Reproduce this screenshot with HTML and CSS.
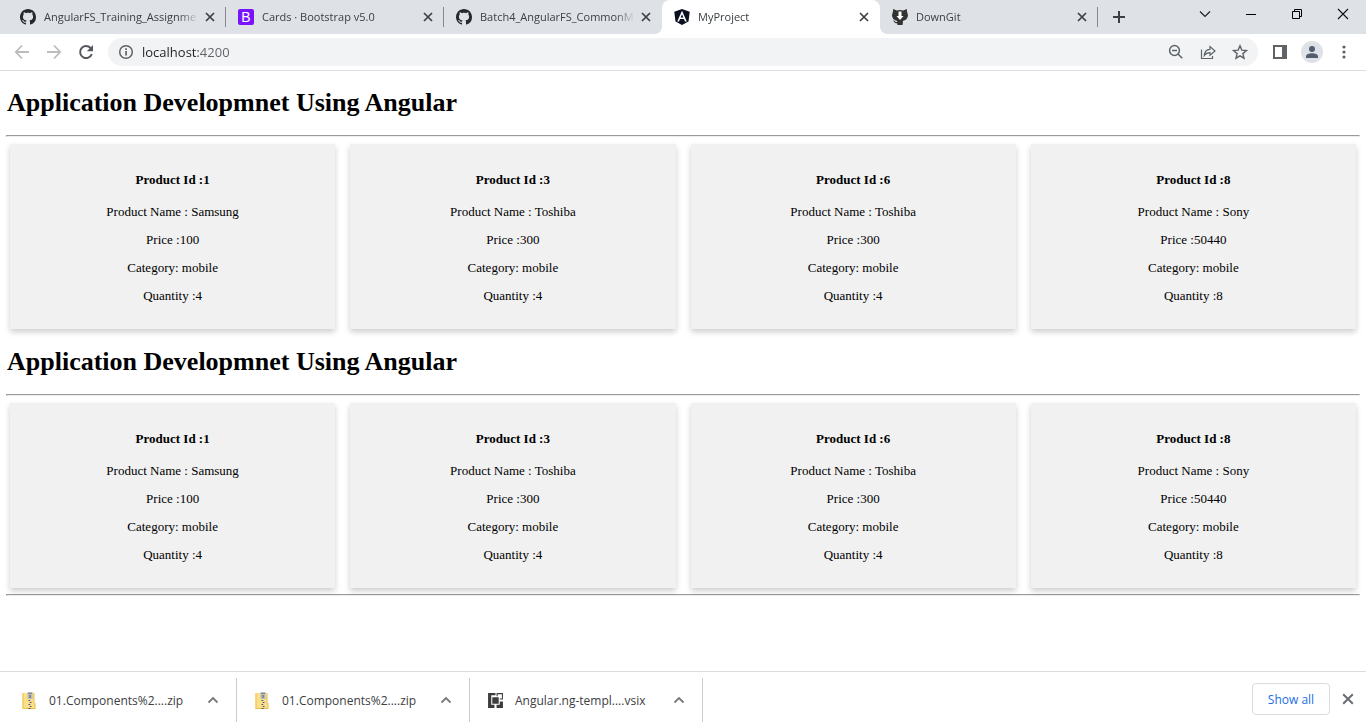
FILE: index.html
```html
<!DOCTYPE html>
<html lang="en">
<head>
<meta charset="utf-8">
<title>MyProject</title>
<link rel="stylesheet" href="styles.css">
</head>
<body>
<svg class="defs" aria-hidden="true">
  <symbol id="github" viewBox="0 0 16 16"><path fill="#24292f" d="M8 0C3.58 0 0 3.58 0 8c0 3.54 2.29 6.53 5.47 7.59.4.07.55-.17.55-.38 0-.19-.01-.82-.01-1.49-2.01.37-2.53-.49-2.69-.94-.09-.23-.48-.94-.82-1.13-.28-.15-.68-.52-.01-.53.63-.01 1.08.58 1.23.82.72 1.21 1.87.87 2.33.66.07-.52.28-.87.51-1.07-1.78-.2-3.64-.89-3.64-3.95 0-.87.31-1.59.82-2.15-.08-.2-.36-1.02.08-2.12 0 0 .67-.21 2.2.82.64-.18 1.32-.27 2-.27s1.36.09 2 .27c1.53-1.04 2.2-.82 2.2-.82.44 1.1.16 1.92.08 2.12.51.56.82 1.27.82 2.15 0 3.07-1.87 3.75-3.65 3.95.29.25.54.73.54 1.48 0 1.07-.01 1.93-.01 2.2 0 .21.15.46.55.38A8.01 8.01 0 0 0 16 8c0-4.42-3.58-8-8-8z"/></symbol>
  <symbol id="cross" viewBox="0 0 10 10"><path d="M1 1l8 8M9 1l-8 8" fill="none" stroke="currentColor" stroke-width="1.7"/></symbol>
  <symbol id="chevron-up" viewBox="0 0 12 8"><path d="M1.500 6.500L6 2l4.500 4.500" fill="none" stroke="currentColor" stroke-width="1.800"/></symbol>
  <symbol id="zip" viewBox="0 0 14 17">
    <path fill="#e9bd4a" d="M0 1h12v10h1v6H0z"/>
    <path fill="#fbe08a" d="M1 1h10v10h1v5H1z"/>
    <path fill="#f5d268" d="M0 1h1v16H0z"/>
    <path fill="#b9bdc2" d="M5 0h5v7H5z"/>
    <path fill="#55585c" d="M6 1h1v1H6zM8 1h1v1H8zM7 3h1v3H7zM6 8h2v1H6zM7 10h2v1H7zM6 12h2v1H6zM7 14h2v1H7zM6 16h2v1H6z"/>
    <path fill="#d8d9d6" d="M8 8h1v1H8zM6 10h1v1H6zM8 12h1v1H8zM6 14h1v1H6z"/>
  </symbol>
</svg>

<header class="browser">
  <div class="tabstrip">
    <nav class="tabs" aria-label="Tabs">
      <div class="tab">
        <svg class="favicon" aria-hidden="true"><use href="#github"/></svg>
        <span class="tab-title">AngularFS_Training_Assignme</span>
        <button class="tab-close" aria-label="Close tab"><svg><use href="#cross"/></svg></button>
      </div>
      <div class="tab">
        <span class="favicon bootstrap" aria-hidden="true">B</span>
        <span class="tab-title">Cards · Bootstrap v5.0</span>
        <button class="tab-close" aria-label="Close tab"><svg><use href="#cross"/></svg></button>
      </div>
      <div class="tab before-active">
        <svg class="favicon" aria-hidden="true"><use href="#github"/></svg>
        <span class="tab-title">Batch4_AngularFS_CommonM</span>
        <button class="tab-close" aria-label="Close tab"><svg><use href="#cross"/></svg></button>
      </div>
      <div class="tab active">
        <svg class="favicon" viewBox="0 0 16 16" aria-hidden="true"><path fill="#0b1020" d="M8 0l7.700 2.700-1.200 9.700L8 16l-6.500-3.600L.3 2.700z"/><path fill="#fff" fill-rule="evenodd" d="M8 1.800L3.200 12.400H5l1-2.400h4l1 2.400h1.800zM8 5.200l1.400 3.300H6.600z"/></svg>
        <span class="tab-title">MyProject</span>
        <button class="tab-close" aria-label="Close tab"><svg><use href="#cross"/></svg></button>
      </div>
      <div class="tab">
        <svg class="favicon" viewBox="0 0 16 16" aria-hidden="true"><path fill="#333" d="M1.200 0l3.500 1.500Q8 .7 11.300 1.500L14.800 0l.4 3.500Q16.200 5 15.800 7.500 15 11 10.800 12v3.200q0 .8-.8.8H6q-.8 0-.8-.8v-1Q3 14.600 2.300 13 1.800 12 .9 11.500q1.500-.4 2.300.9.700 1 2 .6V12Q1 11 .2 7.500-.2 5 .8 3.500z"/><path fill="#fff" d="M6.500 2.500h3V7h2L8 11 4.500 7h2z"/></svg>
        <span class="tab-title">DownGit</span>
        <button class="tab-close" aria-label="Close tab"><svg><use href="#cross"/></svg></button>
      </div>
    </nav>
    <button class="new-tab" aria-label="New tab"><svg width="12" height="12" viewBox="0 0 12 12"><path d="M6 0v12M0 6h12" stroke="currentColor" stroke-width="2"/></svg></button>
    <div class="window-controls">
      <button aria-label="Search tabs"><svg width="12" height="12" viewBox="0 0 12 12"><path d="M1 3.500l5 5 5-5" fill="none" stroke="#222" stroke-width="1.200"/></svg></button>
      <button aria-label="Minimize"><svg width="12" height="12" viewBox="0 0 12 12"><path d="M1 6h10v1H1z" fill="#000"/></svg></button>
      <button aria-label="Restore"><svg width="12" height="12" viewBox="0 0 12 12"><path d="M1.500 3.500h7v7h-7zM3.500 3V1.500h7v7H9" fill="none" stroke="#000"/></svg></button>
      <button aria-label="Close"><svg width="12" height="12" viewBox="0 0 12 12"><path d="M1 1l10 10M11 1L1 11" stroke="#111" stroke-width="1.100"/></svg></button>
    </div>
  </div>

  <div class="toolbar">
    <button class="nav-button disabled" aria-label="Back"><svg width="16" height="16" viewBox="0 0 16 16"><path d="M8 1.500L1.800 8 8 14.500M2 8h13" fill="none" stroke="currentColor" stroke-width="1.800"/></svg></button>
    <button class="nav-button disabled" aria-label="Forward"><svg width="16" height="16" viewBox="0 0 16 16"><path d="M8 1.500L14.200 8 8 14.500M14 8H1" fill="none" stroke="currentColor" stroke-width="1.800"/></svg></button>
    <button class="nav-button" aria-label="Reload"><svg width="16" height="16" viewBox="0 0 16 16"><path d="M13.800 10A6 6 0 1 1 12.500 4" fill="none" stroke="currentColor" stroke-width="2"/><path d="M15 1v6.200H8.800z" fill="currentColor"/></svg></button>
    <div class="omnibox">
      <svg width="16" height="16" viewBox="0 0 16 16" aria-hidden="true"><circle cx="8" cy="8" r="6.300" fill="none" stroke="currentColor" stroke-width="1.500"/><path d="M7.200 7h1.700v4.500H7.200zM7.200 4.200h1.700v1.700H7.200z" fill="currentColor"/></svg>
      <input class="address" type="text" aria-label="Address" value="localhost:4200">
      <div class="omnibox-actions">
        <button aria-label="Zoom"><svg width="16" height="16" viewBox="0 0 16 16"><circle cx="6.500" cy="6.500" r="4.900" fill="none" stroke="currentColor" stroke-width="1.500"/><path d="M10 10l4.300 4.300M4 6.500h5" stroke="currentColor" stroke-width="1.500"/></svg></button>
        <button aria-label="Share"><svg width="16" height="16" viewBox="0 0 16 16"><path d="M1.500 5.500v9h11v-2.500" fill="none" stroke="currentColor" stroke-width="1.200"/><path d="M4.300 11.500c.3-4 2.300-6 5.700-6.200V2.500L15 7l-5 4.300V8.700c-2.500 0-4.200.8-5.700 2.800z" fill="none" stroke="currentColor" stroke-width="1.200"/></svg></button>
        <button aria-label="Bookmark"><svg width="16" height="16" viewBox="0 0 16 16"><path d="M8 1.800l1.800 4.300 4.700.4-3.600 3.100 1.100 4.600L8 11.800l-4 2.400 1.100-4.600L1.500 6.500l4.700-.4z" fill="none" stroke="currentColor" stroke-width="1.400"/></svg></button>
      </div>
    </div>
    <div class="toolbar-actions">
      <button aria-label="Side panel"><svg width="14" height="14" viewBox="0 0 14 14"><path fill-rule="evenodd" d="M0 0h14v14H0zM2 2v10h7V2z" fill="currentColor"/></svg></button>
      <button class="profile" aria-label="Profile"><svg width="14" height="14" viewBox="0 0 14 14"><circle cx="7" cy="4" r="3" fill="currentColor"/><path d="M1 13v-1.500C1 9.300 4 8.300 7 8.300s6 1 6 3.200V13z" fill="currentColor"/></svg></button>
      <button aria-label="Menu"><svg width="4" height="14" viewBox="0 0 4 14"><g fill="currentColor"><circle cx="2" cy="2" r="1.600"/><circle cx="2" cy="7" r="1.600"/><circle cx="2" cy="12" r="1.600"/></g></svg></button>
    </div>
  </div>
</header>

<main class="page">
  <section>
    <h1>Application Developmnet Using Angular</h1>
    <hr>
    <div class="cards">
      <article class="card"><h3>Product Id :1</h3><p>Product Name : Samsung</p><p>Price :100</p><p>Category: mobile</p><p>Quantity :4</p></article>
      <article class="card"><h3>Product Id :3</h3><p>Product Name : Toshiba</p><p>Price :300</p><p>Category: mobile</p><p>Quantity :4</p></article>
      <article class="card"><h3>Product Id :6</h3><p>Product Name : Toshiba</p><p>Price :300</p><p>Category: mobile</p><p>Quantity :4</p></article>
      <article class="card"><h3>Product Id :8</h3><p>Product Name : Sony</p><p>Price :50440</p><p>Category: mobile</p><p>Quantity :8</p></article>
    </div>
  </section>
  <section>
    <h1>Application Developmnet Using Angular</h1>
    <hr>
    <div class="cards">
      <article class="card"><h3>Product Id :1</h3><p>Product Name : Samsung</p><p>Price :100</p><p>Category: mobile</p><p>Quantity :4</p></article>
      <article class="card"><h3>Product Id :3</h3><p>Product Name : Toshiba</p><p>Price :300</p><p>Category: mobile</p><p>Quantity :4</p></article>
      <article class="card"><h3>Product Id :6</h3><p>Product Name : Toshiba</p><p>Price :300</p><p>Category: mobile</p><p>Quantity :4</p></article>
      <article class="card"><h3>Product Id :8</h3><p>Product Name : Sony</p><p>Price :50440</p><p>Category: mobile</p><p>Quantity :8</p></article>
    </div>
  </section>
  <hr class="page-end">
</main>

<footer class="downloads">
  <div class="download">
    <svg class="file-icon" aria-hidden="true"><use href="#zip"/></svg>
    <span class="file-name">01.Components%2....zip</span>
    <button aria-label="Download options"><svg width="12" height="8"><use href="#chevron-up"/></svg></button>
  </div>
  <div class="download">
    <svg class="file-icon" aria-hidden="true"><use href="#zip"/></svg>
    <span class="file-name">01.Components%2....zip</span>
    <button aria-label="Download options"><svg width="12" height="8"><use href="#chevron-up"/></svg></button>
  </div>
  <div class="download">
    <svg class="file-icon" viewBox="0 0 16 16" aria-hidden="true"><path fill="#3c3c3e" d="M1 1h7v2H4v9h3v3H1zM15 15H9v-3h3V9h3zM5 5h6v6H5zM9 1h6v6h-3V6h2V2h-4v2H9z"/></svg>
    <span class="file-name">Angular.ng-templ....vsix</span>
    <button aria-label="Download options"><svg width="12" height="8"><use href="#chevron-up"/></svg></button>
  </div>
  <div class="shelf-actions">
    <button class="show-all">Show all</button>
    <button class="shelf-close" aria-label="Close downloads bar"><svg width="12" height="12"><use href="#cross"/></svg></button>
  </div>
</footer>
</body>
</html>
```

FILE: styles.css
```css
* { box-sizing: border-box; }

body {
  margin: 0;
  min-height: 100vh;
  display: flex;
  flex-direction: column;
  background: #fff;
  font-family: "Open Sans", "Noto Sans", sans-serif;
  font-size: 12px;
  color: #3c4043;
}

button {
  display: flex;
  align-items: center;
  justify-content: center;
  flex: none;
  padding: 0;
  border: 0;
  background: none;
  color: inherit;
  font: inherit;
}

svg { display: block; flex: none; }
.defs { position: absolute; width: 0; height: 0; }

/* Tab strip */
.tabstrip {
  display: flex;
  height: 34px;
  padding-left: 8px;
  background: #dee1e6;
}
.tabs { display: flex; flex: 0 1 1090px; min-width: 0; }
.tab {
  position: relative;
  display: flex;
  align-items: center;
  flex: 1 1 0;
  min-width: 0;
  padding: 0 8px 0 12px;
}
.tab::after {
  content: "";
  position: absolute;
  top: 7px;
  right: 0;
  width: 1px;
  height: 20px;
  background: #85888d;
}
.tab.before-active::after { display: none; }
.tab.active { background: #fff; border-radius: 8px 8px 0 0; }
.tab.active::before,
.tab.active::after {
  content: "";
  position: absolute;
  top: auto;
  bottom: 0;
  width: 8px;
  height: 8px;
}
.tab.active::before { left: -8px; background: radial-gradient(circle at 0 0, #dee1e6 8px, #fff 8px); }
.tab.active::after { right: -8px; background: radial-gradient(circle at 100% 0, #dee1e6 8px, #fff 8px); }
.favicon { width: 16px; height: 16px; flex: none; }
.bootstrap {
  border-radius: 2px;
  background: #7a12fb;
  color: #fff;
  font: 14px/16px "Liberation Sans", sans-serif;
  text-align: center;
}
.tab-title {
  flex: 1;
  min-width: 0;
  margin-left: 8px;
  overflow: hidden;
  white-space: nowrap;
  font-size: 11px;
  line-height: 18px;
  mask-image: linear-gradient(to left, transparent, #000 20px);
}
.tab-close { width: 16px; height: 16px; margin-left: 3px; }
.tab-close svg { width: 10px; height: 10px; }
.new-tab { width: 28px; margin-left: 7px; }
.window-controls { display: flex; height: 28px; margin-left: auto; }
.window-controls button { width: 46px; }

/* Toolbar */
.toolbar {
  display: flex;
  align-items: center;
  height: 37px;
  padding: 0 11px 0 6px;
  border-bottom: 1px solid #dadce0;
  color: #5f6368;
}
.nav-button { width: 32px; height: 28px; color: #54585d; }
.nav-button.disabled { color: #babcbe; }
.omnibox {
  display: flex;
  align-items: center;
  flex: 1;
  min-width: 0;
  height: 28px;
  margin-left: 6px;
  padding: 0 2px 0 10px;
  border-radius: 14px;
  background: #f1f3f4;
}
.address {
  flex: 1;
  min-width: 0;
  margin-left: 8px;
  padding: 0;
  border: 0;
  outline: 0;
  color: transparent;
  background: linear-gradient(to right, #202124 56px, #5f6368 56px);
  background-clip: text;
  font: 13px/20px "Open Sans", "Noto Sans", sans-serif;
}
.omnibox-actions { display: flex; }
.omnibox-actions button { width: 32px; height: 28px; }
.toolbar-actions {
  display: flex;
  align-items: center;
  gap: 10px;
  margin-left: 11px;
}
.toolbar-actions button { width: 22px; height: 22px; }
.toolbar-actions .profile { border-radius: 50%; background: #dee1e6; color: #525d70; }

/* Page */
.page {
  flex: 1;
  padding: 0 6px;
  color: #000;
  font-family: "Liberation Serif", "Times New Roman", serif;
  font-size: 13px;
  line-height: 15px;
}
.page section { padding-top: 17px; }
.page section + section { padding-top: 18px; }
.page h1 { margin: 0 0 18px 1px; font-size: 26px; line-height: 29px; }
.page hr {
  height: 2px;
  margin: 0;
  border: 1px solid;
  border-color: #9a9a9a #eee #eee #9a9a9a;
}
.page .page-end { margin-top: 6px; }
.cards {
  display: grid;
  grid-template-columns: repeat(4, 1fr);
  gap: 15px;
  padding: 7px 4px 0 4px;
}
.card {
  padding: 28px 13px 26px;
  background: #f1f1f1;
  box-shadow: 0 3px 6px rgba(0, 0, 0, 0.2);
  text-align: center;
}
.card h3 { margin: 0 0 17px; font-size: 13px; }
.card p { margin: 0 0 13px; }
.card p:last-child { margin: 0; }

/* Downloads shelf */
.downloads {
  display: flex;
  height: 57px;
  padding: 6px 0;
  border-top: 1px solid #dadce0;
}
.download {
  display: flex;
  align-items: center;
  width: 233px;
  padding: 0 16px 0 17px;
  border-right: 1px solid #c9cbce;
}
.download:first-child { width: 237px; padding-left: 21px; }
.file-icon { width: 17px; height: 17px; }
.file-name { flex: 1; min-width: 0; margin-left: 11px; white-space: nowrap; }
.download button { width: 14px; height: 24px; color: #76797d; }
.shelf-actions {
  display: flex;
  align-items: center;
  gap: 12px;
  margin-left: auto;
  padding: 0 12px 2px 0;
}
.show-all {
  width: 78px;
  height: 32px;
  border: 1px solid #dadce0;
  border-radius: 4px;
  color: #1a6fe8;
  font-weight: 500;
}
.shelf-close { color: #6b6e72; }
```
